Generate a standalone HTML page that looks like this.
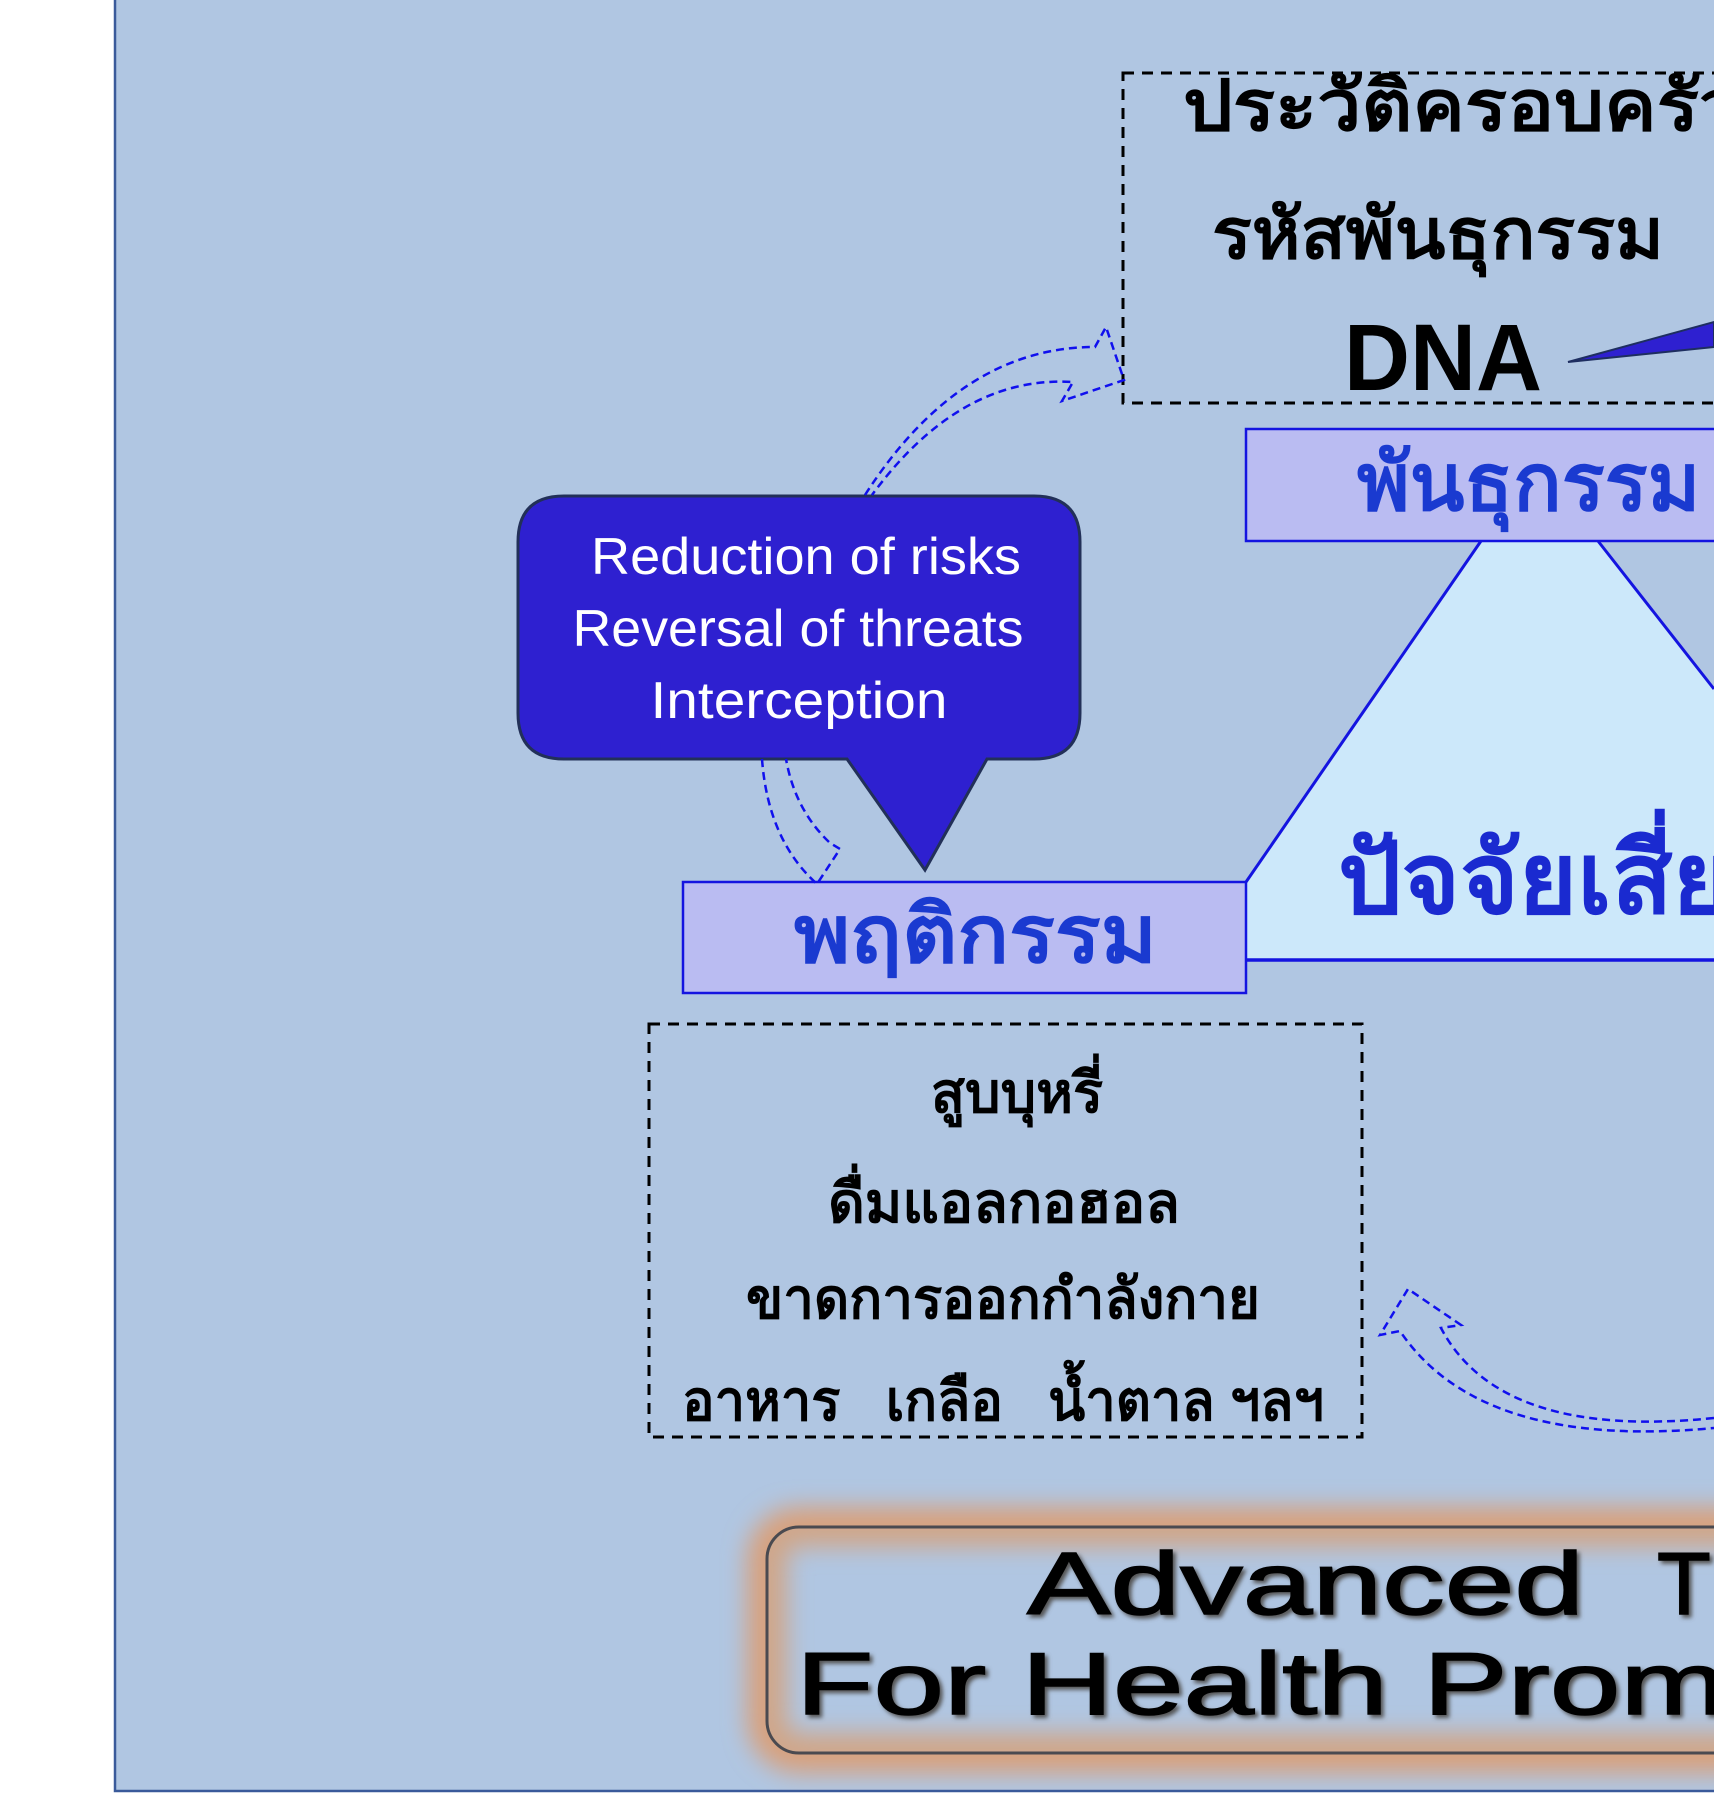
<!DOCTYPE html>
<html><head><meta charset="utf-8"><style>
html,body{margin:0;padding:0;background:#fff;}
svg{display:block;}
</style></head><body>
<svg width="1714" height="1800" viewBox="0 0 1714 1800" xmlns="http://www.w3.org/2000/svg">
<defs>
<filter id="glow" x="-10%" y="-30%" width="120%" height="160%"><feGaussianBlur stdDeviation="12"/></filter>
<filter id="ts" x="-5%" y="-20%" width="110%" height="140%"><feGaussianBlur stdDeviation="2"/></filter>
<clipPath id="pg"><rect x="116" y="0" width="1598" height="1790"/></clipPath>
<clipPath id="bx"><rect x="767" y="1527" width="1000" height="226" rx="32"/></clipPath>
</defs>
<rect x="0" y="0" width="1714" height="1800" fill="#fff"/>
<rect x="115" y="-2" width="1610" height="1793" fill="#b0c6e2" stroke="#3a5a9a" stroke-width="2.5"/>
<g clip-path="url(#pg)">
<rect x="1123" y="73" width="700" height="330" fill="none" stroke="#000" stroke-width="3" stroke-dasharray="11,8"/>
<g font-family="'Liberation Sans','Noto Sans CJK SC',sans-serif" font-weight="bold" fill="#000">
<text x="1183" y="130" font-size="70" textLength="560" lengthAdjust="spacingAndGlyphs">ประวัติครอบครัว</text>
<text x="1212" y="258" font-size="70" textLength="452" lengthAdjust="spacingAndGlyphs">รหัสพันธุกรรม</text>
<text x="1344" y="390" font-size="95" textLength="198" lengthAdjust="spacingAndGlyphs">DNA</text>
</g>
<polygon points="1568,362 1714,322 1714,347" fill="#2e20d0" stroke="#1e2e60" stroke-width="2"/>
<polygon points="1481,541 1598,541 1714,689 1714,960 1246,960 1246,882" fill="#cce8fa"/>
<polyline points="1481,541 1246,882" fill="none" stroke="#1414e0" stroke-width="3"/>
<polyline points="1598,541 1714,689" fill="none" stroke="#1414e0" stroke-width="3"/>
<line x1="1246" y1="960" x2="1714" y2="960" stroke="#1414e0" stroke-width="3.5"/>
<text x="1338" y="913" font-family="'Liberation Sans',sans-serif" font-weight="bold" font-size="100" fill="#1a2ad0">ปัจจัยเสี่ยง</text>
<rect x="1246" y="429" width="500" height="112" fill="#babcf2" stroke="#1414e0" stroke-width="2.5"/>
<text x="1357" y="510" font-family="'Liberation Sans',sans-serif" font-weight="bold" font-size="80" fill="#1a3ad0">พันธุกรรม</text>
<rect x="683" y="882" width="563" height="111" fill="#babcf2" stroke="#1414e0" stroke-width="2.5"/>
<text x="794" y="962" font-family="'Liberation Sans',sans-serif" font-weight="bold" font-size="80" fill="#1a3ad0" textLength="363" lengthAdjust="spacingAndGlyphs">พฤติกรรม</text>
<path d="M564,496 H1034 Q1080,496 1080,542 V713 Q1080,759 1034,759 H987 L925,870 L847,759 H564 Q518,759 518,713 V542 Q518,496 564,496 Z" fill="#2e20d0" stroke="#223058" stroke-width="3"/>
<g font-family="'Liberation Sans',sans-serif" font-size="52" fill="#fff" text-anchor="middle">
<text x="806" y="574" textLength="430" lengthAdjust="spacingAndGlyphs">Reduction of risks</text>
<text x="798" y="646" textLength="451" lengthAdjust="spacingAndGlyphs">Reversal of threats</text>
<text x="799" y="718" textLength="297" lengthAdjust="spacingAndGlyphs">Interception</text>
</g>
<g fill="none" stroke="#1010ee" stroke-width="2.5" stroke-dasharray="8,5">
<path d="M865,495 Q960,347 1095,347 L1106,327 L1124,380 L1062,401 L1073,382 Q960,375 872,495"/>
<path d="M762,759 Q768,840 817,884 L840,849 L830,843 Q795,810 786,759"/>
<path d="M1714,1418 Q1500,1440 1441,1328 L1461,1325 L1408,1289 L1380,1335 L1400,1331 Q1480,1450 1714,1428"/>
</g>
<rect x="649" y="1024" width="713" height="413" fill="none" stroke="#000" stroke-width="3" stroke-dasharray="11,8"/>
<g font-family="'Liberation Sans',sans-serif" font-weight="bold" font-size="56" fill="#000" text-anchor="middle">
<text x="1017" y="1112">สูบบุหรี่</text>
<text x="1004" y="1222" textLength="352" lengthAdjust="spacingAndGlyphs">ดื่มแอลกอฮอล</text>
<text x="1003" y="1318" textLength="514" lengthAdjust="spacingAndGlyphs">ขาดการออกกำลังกาย</text>
<text x="1003" y="1420" textLength="642" lengthAdjust="spacingAndGlyphs">อาหาร&#160;&#160;&#160;เกลือ&#160;&#160;&#160;น้ำตาล ฯลฯ</text>
</g>
<rect x="767" y="1527" width="1000" height="226" rx="32" fill="none" stroke="#d8a07c" stroke-width="40" filter="url(#glow)"/>
<rect x="767" y="1527" width="1000" height="226" rx="32" fill="#b0c6e2"/>
<g clip-path="url(#bx)">
<rect x="767" y="1527" width="1000" height="226" rx="32" fill="none" stroke="#d0a688" stroke-width="40" filter="url(#glow)"/>
</g>
<rect x="767" y="1527" width="1000" height="226" rx="32" fill="none" stroke="#4a4a50" stroke-width="3"/>
<g font-family="'Liberation Sans',sans-serif" font-size="88">
<g fill="#555" stroke="#555" stroke-width="1.5" filter="url(#ts)" transform="translate(3,3)">
<text x="1027" y="1614" textLength="557" lengthAdjust="spacingAndGlyphs">Advanced</text>
<text x="1657" y="1614">T</text>
<text x="796" y="1714" textLength="930" lengthAdjust="spacingAndGlyphs">For Health Prom</text>
</g>
<g fill="#000" stroke="#000" stroke-width="1.5">
<text x="1027" y="1614" textLength="557" lengthAdjust="spacingAndGlyphs">Advanced</text>
<text x="1657" y="1614">T</text>
<text x="796" y="1714" textLength="930" lengthAdjust="spacingAndGlyphs">For Health Prom</text>
</g>
</g>
</g>
</svg>
</body></html>
